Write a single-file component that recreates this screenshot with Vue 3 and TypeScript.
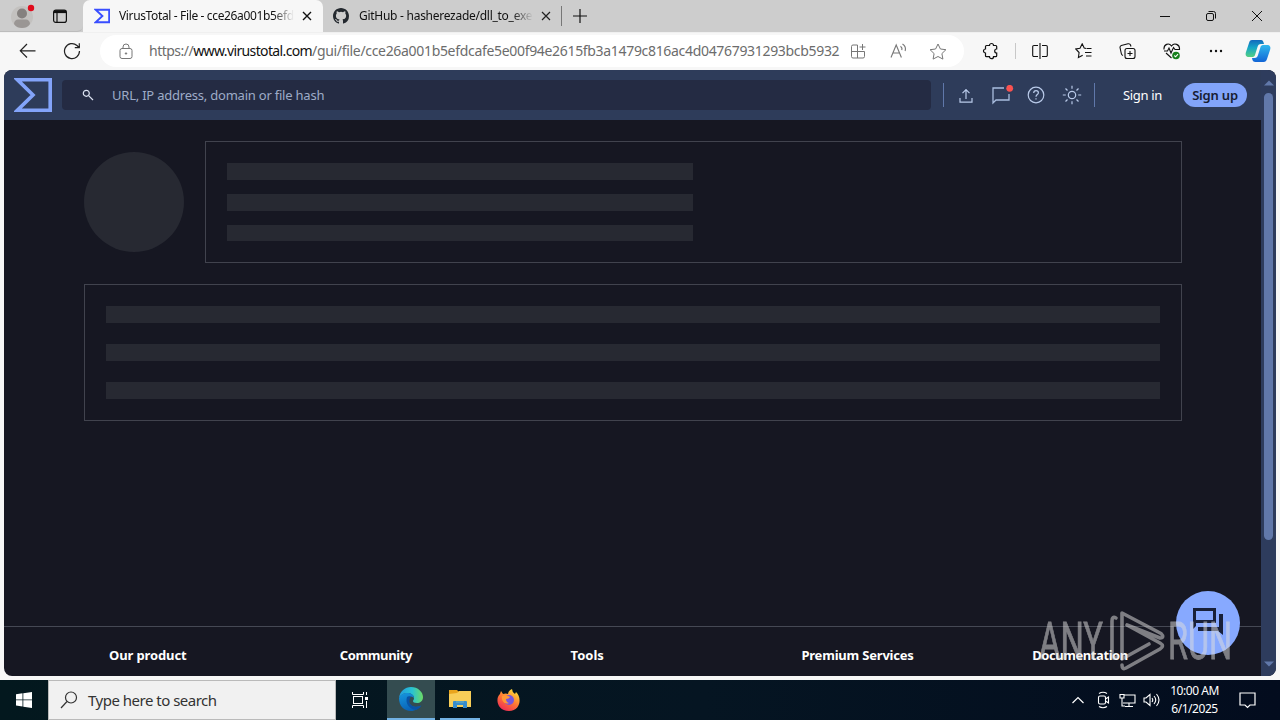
<script setup lang="ts">
interface FooterColumn { title: string }

const footerColumns: FooterColumn[] = [
  { title: 'Our product' },
  { title: 'Community' },
  { title: 'Tools' },
  { title: 'Premium Services' },
  { title: 'Documentation' },
]
const urlScheme = 'https://'
const urlHost = 'www.virustotal.com'
const urlPath = '/gui/file/cce26a001b5efdcafe5e00f94e2615fb3a1479c816ac4d04767931293bcb5932'
</script>

<template>
  <div class="desktop">
    <div class="tabstrip">
      <div class="tab-actions">
        <svg class="profile" width="26" height="28" viewBox="0 0 26 28">
          <circle cx="12" cy="14" r="11" fill="#c3c1bf" />
          <circle cx="12" cy="10.500" r="5" fill="#85817f" />
          <path d="M4 21c0-3 2-4.500 4-4.500h8c2 0 4 1.500 4 4.500-2 3-5 4-8 4s-6-1-8-4z" fill="#9a9694" />
          <circle cx="21" cy="5" r="3.200" fill="#e00b1c" />
        </svg>
        <svg class="workspaces" width="16" height="16" viewBox="0 0 16 16" fill="none" stroke="#111" stroke-width="1.200">
          <rect x="1.600" y="2" width="12.800" height="12.400" rx="2.200" />
          <path d="M2 3.600h12" stroke-width="3" /><path d="M5 4v10" />
        </svg>
      </div>
      <div class="tab tab-active">
        <svg width="16" height="16" viewBox="0 0 38 34"><path fill="none" stroke="#394eff" stroke-width="4.500" d="M4 2h32v30H4l16-15z" /></svg>
        <span class="tab-title title-one">VirusTotal - File - cce26a001b5efd</span>
        <svg class="close" width="10" height="10" viewBox="0 0 10 10" stroke="#111" stroke-width="1.400"><path d="M1 1l8 8M9 1l-8 8" /></svg>
      </div>
      <div class="tab tab-two">
        <svg width="16" height="16" viewBox="0 0 16 16"><path fill="#24292f" d="M8 0C3.58 0 0 3.58 0 8c0 3.54 2.29 6.53 5.47 7.59.4.07.55-.17.55-.38 0-.19-.01-.82-.01-1.49-2.01.37-2.53-.49-2.69-.94-.09-.23-.48-.94-.82-1.13-.28-.15-.68-.52-.01-.53.63-.01 1.08.58 1.23.82.72 1.21 1.87.87 2.33.66.07-.52.28-.87.51-1.07-1.78-.2-3.64-.89-3.64-3.95 0-.87.31-1.59.82-2.15-.08-.2-.36-1.02.08-2.12 0 0 .67-.21 2.2.82a7.6 7.6 0 0 1 4 0c1.53-1.04 2.2-.82 2.2-.82.44 1.1.16 1.92.08 2.12.51.56.82 1.27.82 2.15 0 3.07-1.87 3.75-3.65 3.95.29.25.54.73.54 1.48 0 1.07-.01 1.93-.01 2.2 0 .21.15.46.55.38A8.01 8.01 0 0 0 16 8c0-4.42-3.58-8-8-8z" /></svg>
        <span class="tab-title title-two">GitHub - hasherezade/dll_to_exe:</span>
        <svg class="close" width="10" height="10" viewBox="0 0 10 10" stroke="#222" stroke-width="1.200"><path d="M1 1l8 8M9 1l-8 8" /></svg>
      </div>
      <i class="tab-divider"></i>
      <svg class="new-tab" width="14" height="14" viewBox="0 0 14 14" stroke="#111" stroke-width="1.200"><path d="M7 0v14M0 7h14" /></svg>
      <div class="window-controls">
        <svg width="46" height="32" viewBox="0 0 46 32" stroke="#111"><path d="M18 16.500h10" /></svg>
        <svg width="46" height="32" viewBox="0 0 46 32" fill="none" stroke="#111"><rect x="18.500" y="13.500" width="7" height="7" rx="1.500" /><path d="M20.500 11.500h5a2 2 0 0 1 2 2v5" /></svg>
        <svg width="46" height="32" viewBox="0 0 46 32" stroke="#111"><path d="M18 11l10 10M28 11L18 21" /></svg>
      </div>
    </div>

    <div class="toolbar">
      <svg class="back" width="18" height="16" viewBox="0 0 18 16" fill="none" stroke="#222" stroke-width="1.200"><path d="M8 1L1.300 7.800 8 14.500M1.500 7.800H16.500" /></svg>
      <svg class="reload" width="18" height="18" viewBox="0 0 18 18" fill="none" stroke="#222" stroke-width="1.200"><path d="M16.500 9A7.500 7.500 0 1 1 14 3.500L16 5.500M16.300 1.300v4.400h-4.500" /></svg>
      <div class="address">
        <svg class="lock" width="14" height="17" viewBox="0 0 14 17" fill="none" stroke="#777"><rect x="1" y="5.500" width="12" height="10" rx="2" /><path d="M4 5.500V4a3 3 0 0 1 6 0v1.500" /><circle cx="7" cy="10.500" r=".7" fill="#666" /></svg>
        <span class="url"><span class="scheme">{{ urlScheme }}</span><span class="host">{{ urlHost }}</span><span class="path">{{ urlPath }}</span></span>
        <svg class="apps" width="16" height="16" viewBox="0 0 16 16" fill="none" stroke="#777"><path d="M7.500 2H3a1.500 1.500 0 0 0-1.500 1.500v10A1.500 1.500 0 0 0 3 15h10a1.500 1.500 0 0 0 1.500-1.500V8.500h-13M7.500 2v13M12.500 1v6M9.500 4h6" /></svg>
        <svg class="read" width="18" height="16" viewBox="0 0 18 16" fill="none" stroke="#777" stroke-width="1.100"><path d="M1 14.500L6.200 2l5.200 12.500M3 10h6.500M10.500 3.200q2 1.500 1.300 4M12.500 1q4 2.500 2.600 7" /></svg>
        <svg class="star" width="18" height="17" viewBox="0 0 18 17" fill="none" stroke="#777" stroke-linejoin="round"><path d="M9 1l2.400 5 5.500.7-4 3.900 1 5.500L9 13.500l-4.900 2.600 1-5.500-4-3.900 5.500-.7z" /></svg>
      </div>
      <div class="browser-actions">
        <svg class="ext" width="18" height="18" viewBox="0 0 18 18" fill="none" stroke="#111" stroke-width="1.200"><path d="M4.500 3.500h3a2 2 0 0 1 4 0h2.200a1 1 0 0 1 1 1V7a1.900 1.900 0 0 0 0 4v2.700a1 1 0 0 1-1 1h-2.200a2 2 0 0 1-4 0h-3a1 1 0 0 1-1-1V11a2 2 0 1 1 0-4V4.500a1 1 0 0 1 1-1z" /></svg>
        <i class="bar-divider"></i>
        <svg class="split" width="16" height="16" viewBox="0 0 16 16" fill="none" stroke="#111" stroke-width="1.100"><path d="M6 2.500H2A1.300 1.300 0 0 0 .7 4v8A1.300 1.300 0 0 0 2 13.500h4M10 2.500h4A1.300 1.300 0 0 1 15.300 4v8a1.300 1.300 0 0 1-1.300 1.500h-4M8 0v16" /></svg>
        <svg class="favs" width="18" height="16" viewBox="0 0 18 16" fill="none" stroke="#111" stroke-width="1.100"><path d="M11 5.500L9.200 5 7.200.8 5 5.200.8 6l3.300 3.500-.7 5 4.300-2.300M11.500 5.500h5M10 9.500h6.500M11 13h5.500" /></svg>
        <svg class="collections" width="17" height="17" viewBox="0 0 17 17" fill="none" stroke="#111" stroke-width="1.100"><rect x="6" y="5.500" width="10" height="10" rx="2" /><path d="M11 8v5M8.500 10.500h5M4 12.500q-1.500-.5-1.700-2L1 4.500a2 2 0 0 1 1.300-2L9 .8q2-.4 2.500 1.200l.5 1.500" /></svg>
        <svg class="health" width="18" height="17" viewBox="0 0 18 17" fill="none" stroke="#111" stroke-width="1.100"><path d="M1 6.500C.5 1 6-.5 8.500 3 11-.5 17 1 16.500 6.500H12l-1.500-2L8 10 6 5 4.500 8H1M3 10l5.500 5" /><circle cx="13" cy="12.500" r="3.800" fill="#16801b" stroke="none" /><path d="M11.300 12.500l1.300 1.300 2.400-2.700" stroke="#fff" /></svg>
        <svg class="more" width="14" height="4" viewBox="0 0 14 4" fill="#111"><circle cx="2" cy="2" r="1.200" /><circle cx="7" cy="2" r="1.200" /><circle cx="12" cy="2" r="1.200" /></svg>
        <svg class="copilot" width="26" height="24" viewBox="0 0 26 24">
          <defs><linearGradient id="cp1" x2="0" y2="1"><stop stop-color="#1269bd" /><stop offset=".45" stop-color="#15a6c7" /><stop offset="1" stop-color="#54cf83" /></linearGradient><linearGradient id="cp2" x2="0" y2="1"><stop stop-color="#30b8ed" /><stop offset="1" stop-color="#1265d6" /></linearGradient></defs>
          <path fill="url(#cp1)" d="M7 1h9c2 0 2.500 2 3 4h-3c-2 0-3 1-3.500 3L10 16c-.4 1.500-1.500 2-3 2H4c-3 0-4-2-3-5L4 4c.5-2 1.300-3 3-3z" />
          <path fill="url(#cp2)" d="M19 6h3c3 0 4 2 3 5l-3 9c-.6 2-1.500 3-3.500 3h-8c-2 0-3-1-3.500-4h2.500c2 0 3-1 3.500-3l2.500-8c.4-1.500 1.500-2 3.500-2z" />
        </svg>
      </div>
    </div>

    <div class="viewport">
      <div class="page">
        <header>
          <svg class="logo" width="38" height="34" viewBox="0 0 38 34"><path fill="none" stroke="#83a4fa" stroke-width="3.600" d="M3.500 1.800H36.200V32.200H3.500L19 17z" /></svg>
          <div class="search">
            <svg width="12" height="12" viewBox="0 0 12 12" fill="none" stroke="#dce3f2" stroke-width="1.200"><circle cx="4.300" cy="4.300" r="3" /><path d="M6.600 6.600L11 11" /></svg>
            <span>URL, IP address, domain or file hash</span>
          </div>
          <i class="head-divider"></i>
          <svg class="upload" width="14" height="16" viewBox="0 0 14 16" fill="none" stroke="#b9cae9" stroke-width="1.200"><path d="M1 11v4.200h12V11M7 12V3M3.500 6.200L7 2.700l3.500 3.500" /></svg>
          <svg class="chat" width="22" height="20" viewBox="0 0 22 20" fill="none" stroke="#a9bddf" stroke-width="1.300"><path d="M12 3H1v15l3-3h13V9" /><circle cx="17.700" cy="3.300" r="3.400" fill="#fa5250" stroke="none" /></svg>
          <svg class="help" width="18" height="18" viewBox="0 0 18 18" fill="none" stroke="#b9cae9" stroke-width="1.200"><circle cx="9" cy="9" r="7.800" /><path d="M6.700 7c0-3.300 4.700-3 4.700-.3 0 1.900-2.400 1.900-2.400 4.100M9 12.200v1.300" /></svg>
          <svg class="sun" width="20" height="20" viewBox="0 0 20 20" fill="none" stroke="#b9cae9" stroke-width="1.200"><circle cx="10" cy="10" r="3.700" /><path d="M10 .8v3M10 16.200v3M.8 10h3M16.200 10h3M3.500 3.500l2 2M14.500 14.500l2 2M3.500 16.500l2-2M14.500 5.500l2-2" /></svg>
          <i class="head-divider second"></i>
          <span class="sign-in">Sign in</span>
          <span class="sign-up"><span>Sign up</span></span>
        </header>
        <main>
          <div class="summary">
            <div class="score"></div>
            <div class="card summary-card"><b></b><b></b><b></b></div>
          </div>
          <div class="card detail-card"><b></b><b></b><b></b></div>
        </main>
        <footer>
          <div v-for="(column, index) in footerColumns" :key="column.title" :class="'column column-' + index"><span>{{ column.title }}</span></div>
        </footer>
        <div class="support">
          <svg width="34" height="32" viewBox="0 0 34 32"><path fill="none" stroke="#182039" stroke-width="3" d="M3.500 4.500h20v12h-20z" /><path fill="#182039" d="M2 16h3v5l-3 3zM7 22h21V9h4v21l-5-4H7z" /></svg>
        </div>
      </div>
      <div class="scrollbar">
        <svg width="10" height="6" viewBox="0 0 10 6"><path d="M0 5.500L5 .5l5 5z" /></svg>
        <i></i>
        <svg class="down" width="10" height="6" viewBox="0 0 10 6"><path d="M0 .5h10l-5 5z" /></svg>
      </div>
    </div>

    <div class="taskbar">
      <div class="start"><svg width="16" height="16" viewBox="0 0 16 16" fill="#fff"><path d="M0 2.200l6.500-.9v6.200H0zM7.300 1.200L16 0v7.500H7.300zM0 8.300h6.500v6.200L0 13.600zM7.300 8.300H16V16l-8.700-1.300z" /></svg></div>
      <div class="task-search">
        <svg width="18" height="18" viewBox="0 0 18 18" fill="none" stroke="#333" stroke-width="1.200"><circle cx="11" cy="6.500" r="5.500" /><path d="M7 10.500L1 17" /></svg>
        <span>Type here to search</span>
      </div>
      <div class="task task-view"><svg width="18" height="18" viewBox="0 0 18 18" fill="none" stroke="#fff"><rect x="2.500" y="5.500" width="9" height="7" /><path d="M1.500 1v2.500h11V1M1.500 17v-2.500h11V17M15.500 1v3M15.500 10v7" /><rect x="14.500" y="6.500" width="2" height="2" fill="#fff" /></svg></div>
      <div class="task edge">
        <svg width="24" height="24" viewBox="0 0 24 24">
          <defs><linearGradient id="eg1"><stop stop-color="#219bdf" /><stop offset=".55" stop-color="#29c3d2" /><stop offset="1" stop-color="#6cdb65" /></linearGradient><linearGradient id="eg2" x2=".4" y2="1"><stop stop-color="#1697df" /><stop offset="1" stop-color="#0962b6" /></linearGradient></defs>
          <path fill="url(#eg1)" d="M0 11C1 4 6 0 12 0c7 0 12 5 12 10 0 4-3 6-6 6-3 0-4-1-4-2 0-.8 1-1 1-3 0-3-3-5-7-5-4 0-7 3-8 5z" />
          <path fill="url(#eg2)" d="M0 11c2-4 5-5 8-5 4 0 7 2 7 5-1-1-2-1.500-3-1.500-2 1-3 3-2 6 1.500 4 6 6 12 3-2 3-6 5.500-10 5.500C5 24 0 19 0 11z" />
          <path fill="#0953a5" d="M8 10c-2 6 2 12 9 13 2-1 4-2.500 5.500-4.500-7 3-13 0-12-5.500.2-1.500.8-2.500 1.500-3.500-1.500-.5-3-.5-4 .5z" />
        </svg>
      </div>
      <div class="task explorer">
        <svg width="22" height="20" viewBox="0 0 22 20"><path fill="#e9a51d" d="M0 1h8l2 2h11v15H0z" /><path fill="#f8ce58" d="M0 5l8-1 2-2h12v16H0z" /><path fill="#368ccc" d="M5 12h12q1 0 1 1v6h-4v-3H8v3H4v-6q0-1 1-1z" /><path fill="#559fc2" d="M7 12h8v2H7z" /></svg>
      </div>
      <div class="task firefox">
        <svg width="24" height="24" viewBox="0 0 24 24"><defs><linearGradient id="ff" x1=".8" y1="0" x2=".2" y2="1"><stop stop-color="#ffe436" /><stop offset=".5" stop-color="#ff7834" /><stop offset="1" stop-color="#ed2558" /></linearGradient></defs><path fill="url(#ff)" d="M4 3l2 3q3-1 5 0 0-3 4-5 0 3 3 5l1-2c6 5 5 19-7 19C0 23-2 10 3 6z" /><circle cx="12" cy="12" r="5" fill="#7656db" /><path fill="#ff9836" d="M5 8q4-2 8 1-1 2-4 2 0 3 3 4c-4 2-8-2-7-7z" /></svg>
      </div>
      <div class="tray">
        <svg class="chevron" width="12" height="8" viewBox="0 0 12 8" fill="none" stroke="#fff" stroke-width="1.200"><path d="M.5 7L6 1.500 11.500 7" /></svg>
        <svg class="camera" width="14" height="18" viewBox="0 0 14 18" fill="none" stroke="#fff" stroke-width="1.100"><rect x="2.500" y="5" width="7" height="8" rx="1.500" /><path d="M9.500 8l3-2v6l-3-2M3 2.500q4-2.500 8 0M3 15.500q4 2.500 8 0" /></svg>
        <svg class="network" width="17" height="15" viewBox="0 0 17 15" fill="none" stroke="#fff" stroke-width="1.100"><path d="M5 2h11v8H4M10 10v3.500M6 13.500h8M3 5v8h3" /><path d="M1 1.500h4V5H1z" /></svg>
        <svg class="sound" width="17" height="14" viewBox="0 0 17 14" fill="none" stroke="#fff" stroke-width="1.100"><path d="M1 5h2l4-3.500v11L3 9H1zM9 5q1.500 2 0 4M11 3q3.500 4 0 8M13.500 1q5 6 0 12" /></svg>
        <div class="clock"><span>10:00 AM</span><span>6/1/2025</span></div>
        <svg class="notice" width="17" height="17" viewBox="0 0 17 17" fill="none" stroke="#fff" stroke-width="1.200"><path d="M1 1h15v12h-5l-2.500 2.500L6 13H1z" /></svg>
      </div>
    </div>

    <svg class="watermark" width="200" height="70" viewBox="0 0 200 70">
      <text x="3" y="53" textLength="64" lengthAdjust="spacingAndGlyphs">ANY</text>
      <text x="132" y="53" textLength="64" lengthAdjust="spacingAndGlyphs">RUN</text>
      <g fill="none" stroke-width="3.600" stroke-linejoin="round" stroke-linecap="round"><path d="M80 12q-4-2-4 3v34q0 5 5 2" /><path d="M113 38L86 53V7l39 20.500q4 4-1 4.500L91 19M91 19l33 18q5 3 0 6L90 62q-4 2-4-3" /></g>
    </svg>
  </div>
</template>

<style>
body { margin: 0; overflow: hidden; }
</style>

<style scoped>
* { box-sizing: border-box; }
.desktop { width: 1280px; height: 720px; position: relative; overflow: hidden; background: #f7f7f7; font-family: "Noto Sans", "Open Sans", sans-serif; font-size: 13px; }
svg { display: block; flex-shrink: 0; }
span { white-space: nowrap; }
.tabstrip { height: 32px; display: flex; background: #cdcdcd; align-items: center; }
.tab-actions { width: 83px; height: 32px; display: flex; align-items: center; padding-left: 10px; border-bottom: 1px solid #bcbcbc; border-radius: 0 0 6px 0; }
.profile { margin-top: 2px; }
.workspaces { margin-left: 16px; }
.tab { display: flex; align-items: center; height: 32px; }
.tab-active { width: 240px; padding-left: 11px; background: #f7f7f7; border-radius: 7px 7px 0 0; }
.tab-title { width: 175px; margin-left: 9px; font-size: 12px; line-height: 20px; color: #111; -webkit-mask-image: linear-gradient(90deg, #000 88%, transparent 100%); mask-image: linear-gradient(90deg, #000 88%, transparent 100%); }
.title-one { letter-spacing: -.36px; }
.title-two { letter-spacing: -.27px; margin-left: 10px; width: 174px; }
.close { margin-left: 8px; }
.tab-two { width: 238px; padding-left: 10px; }
.tab-divider { width: 1px; height: 20px; background: #777; }
.new-tab { margin-left: 11px; }
.window-controls { margin-left: auto; display: flex; }
.toolbar { height: 38px; display: flex; align-items: center; padding-left: 19px; border-top: 1px solid #f0f0f0; padding-bottom: 1px; }
.reload { margin-left: 26px; }
.address { width: 864px; height: 32px; margin-left: 19px; border-radius: 16px; background: #fff; display: flex; align-items: center; padding-left: 19px; }
.url { width: 694px; margin-left: 16px; font-size: 14px; line-height: 22px; color: #6c6c6c; letter-spacing: -.32px; }
.scheme { letter-spacing: -.5px; }
.host { color: #111; letter-spacing: -.63px; }
.apps { margin-left: 7px; }
.read { margin-left: 24px; }
.star { margin-left: 21px; }
.browser-actions { display: flex; align-items: center; margin-left: 18px; }
.bar-divider { width: 1px; height: 16px; background: #c8c8c8; margin-left: 15px; }
.split { margin-left: 16px; }
.favs { margin-left: 27px; }
.collections { margin-left: 26px; }
.health { margin-left: 27px; }
.more { margin-left: 28px; }
.copilot { margin-left: 22px; }
.viewport { width: 1272px; height: 606px; margin-left: 4px; display: flex; border-radius: 8px; overflow: hidden; background: #161722; }
.page { width: 1257px; display: flex; flex-direction: column; position: relative; }
header { height: 50px; background: #2e3c5a; display: flex; align-items: center; padding-left: 10px; flex-shrink: 0; }
.search { width: 869px; height: 30px; margin-left: 10px; border-radius: 4px; background: #242b43; display: flex; align-items: center; padding-left: 20px; color: #9eabc8; }
.search span { margin-left: 18px; letter-spacing: -.22px; }
.head-divider { width: 1px; height: 24px; background: #6078aa; margin-left: 12px; }
.upload { margin-left: 15px; }
.chat { margin-left: 19px; }
.help { margin-left: 13px; }
.sun { margin-left: 17px; }
.head-divider.second { margin-left: 12px; }
.sign-in { width: 40px; margin-left: 28px; color: #fff; letter-spacing: -.35px; }
.sign-up { width: 64px; height: 24px; margin-left: 20px; border-radius: 12px; background: #82a4f9; color: #171c32; display: flex; align-items: center; justify-content: center; font-weight: 600; letter-spacing: -.2px; }
main { height: 506px; padding: 21px 79px 0 80px; flex-shrink: 0; }
.summary { display: flex; justify-content: space-between; height: 122px; }
.score { width: 100px; height: 100px; margin-top: 11px; border-radius: 50%; background: #272932; }
.card { border: 1px solid #41434e; display: flex; flex-direction: column; }
.card b { display: block; height: 17px; background: #272932; flex-shrink: 0; }
.summary-card { width: 977px; padding: 21px; gap: 14px; }
.summary-card b { width: 466px; }
.summary-card b:last-child { height: 16px; }
.detail-card { height: 137px; margin-top: 21px; padding: 21px; gap: 21px; }
footer { height: 50px; border-top: 1px solid #454854; display: flex; padding-left: 105px; color: #fff; font-weight: 700; }
.column { width: 230.800px; padding-top: 19px; line-height: 18px; flex-shrink: 0; letter-spacing: -.2px; }
.column-0 { letter-spacing: -.12px; }
.column-1 { letter-spacing: -.38px; }
.column-2 { letter-spacing: 0; }
.column-4 { width: 100px; letter-spacing: -.43px; }
.support { position: absolute; width: 64px; height: 64px; right: 21px; bottom: 21px; border-radius: 50%; background: #87a9ff; padding: 14px 0 0 15px; }
.scrollbar { width: 15px; height: 606px; background: #2e3c5d; display: flex; flex-direction: column; align-items: center; padding-top: 10px; }
.scrollbar i { width: 9px; height: 447px; background: #6178aa; border-radius: 5px; margin-top: 7px; }
.scrollbar path { fill: #6178aa; }
.down { margin-top: 121px; }
.taskbar { height: 40px; margin-top: 4px; display: flex; background: linear-gradient(90deg, #03181e, #051522 55%, #030c1e); }
.start { width: 48px; display: flex; align-items: center; justify-content: center; }
.task-search { width: 288px; background: #f1f1f1; border: 1px solid #bababa; display: flex; align-items: center; padding-left: 11px; color: #333; font-size: 15px; }
.task-search span { margin-left: 10px; letter-spacing: -.5px; }
.task { width: 48px; display: flex; align-items: center; justify-content: center; }
.task-view { margin-right: 3px; }
.edge { background: #344c50; border-bottom: 2px solid #72b2e4; }
.explorer { width: 40px; margin: 0 5px; border-bottom: 2px solid #72b2e4; }
.tray { display: flex; align-items: center; margin-left: auto; color: #fff; height: 40px; padding-right: 24px; }
.camera { margin-left: 12px; }
.network { margin-left: 9px; }
.sound { margin-left: 7px; }
.clock { width: 53px; margin-left: 8px; display: flex; flex-direction: column; align-items: center; font-size: 12px; line-height: 18px; letter-spacing: -.45px; }
.notice { margin-left: 18px; }
.watermark { position: absolute; left: 1036px; top: 606px; opacity: .52; overflow: visible; }
.watermark text { font-family: Roboto, sans-serif; font-size: 51px; fill: #ddd; stroke: #ddd; stroke-width: .8px; }
.watermark g { stroke: #ddd; }
</style>
